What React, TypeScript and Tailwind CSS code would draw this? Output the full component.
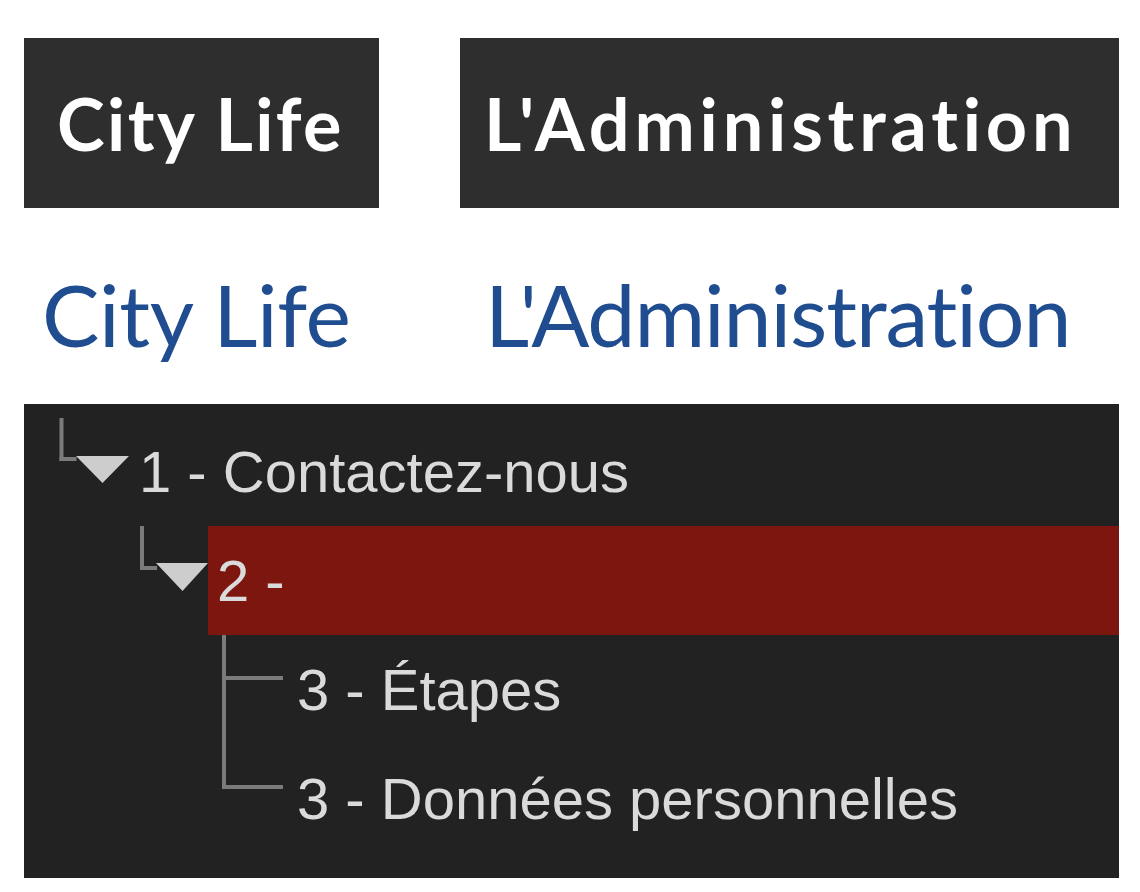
import React from 'react';

type Row = {
  label: string;
  selected?: boolean;
  svgWidth: number;
  guide: React.ReactNode;
};

const LINE = '#7b7b7b';
const ARROW = '#cdcdcd';

const rows: Row[] = [
  {
    label: '1 - Contactez-nous',
    svgWidth: 115,
    guide: (
      <>
        <rect x={35.5} y={1} width={4} height={43} fill={LINE} />
        <rect x={35.5} y={40} width={17} height={4} fill={LINE} />
        <polygon points="52,39 105,39 78.5,66" fill={ARROW} />
      </>
    ),
  },
  {
    label: '2 -',
    selected: true,
    svgWidth: 184,
    guide: (
      <>
        <rect x={116} y={0} width={4} height={44} fill={LINE} />
        <rect x={116} y={40} width={17} height={4} fill={LINE} />
        <polygon points="132,37 184,37 158.5,65" fill={ARROW} />
      </>
    ),
  },
  {
    label: '3 - Étapes',
    svgWidth: 273,
    guide: (
      <>
        <rect x={198} y={0} width={4} height={109} fill={LINE} />
        <rect x={198} y={41} width={61} height={4} fill={LINE} />
      </>
    ),
  },
  {
    label: '3 - Données personnelles',
    svgWidth: 273,
    guide: (
      <>
        <rect x={198} y={0} width={4} height={45} fill={LINE} />
        <rect x={198} y={41} width={61} height={4} fill={LINE} />
      </>
    ),
  },
];

export default function App() {
  return (
    <div className="w-[1140px] h-[892px] bg-white overflow-hidden [font-variant-ligatures:none]">
      {/* dark title tiles */}
      <div className="flex gap-[81px] pl-[24px] pt-[38px]">
        <div className="w-[355px] h-[170px] bg-[#2e2e2e] flex items-center pl-[33px]">
          <span className="text-white font-bold text-[72px] leading-none tracking-[2.4px] [font-family:Lato,sans-serif]">
            City Life
          </span>
        </div>
        <div className="w-[659px] h-[170px] bg-[#2e2e2e] flex items-center pl-[24px]">
          <span className="text-white font-bold text-[72px] leading-none tracking-[4.8px] [font-family:Lato,sans-serif]">
            L'Administration
          </span>
        </div>
      </div>

      {/* blue titles */}
      <div className="h-[196px] flex items-start pt-[63px] pl-[42px] text-[#1f4d90] text-[86px] leading-none [font-family:Lato,sans-serif]">
        <span className="w-[443px] shrink-0 tracking-[-0.4px]">City Life</span>
        <span className="tracking-[-1.1px]">L'Administration</span>
      </div>

      {/* tree panel */}
      <div className="ml-[24px] w-[1095px] h-[474px] bg-[#222222] pt-[13px] [font-family:'Liberation_Sans',Arial,sans-serif] text-[58px] text-[#dadada]">
        {rows.map((row) => (
          <div key={row.label} className="flex h-[109px]">
            <svg width={row.svgWidth} height={109} className="shrink-0">
              {row.guide}
            </svg>
            <div
              className={`flex-1 flex items-center leading-none ${
                row.selected ? 'bg-[#7c160f] pl-[9px]' : ''
              }`}
            >
              {row.label}
            </div>
          </div>
        ))}
      </div>
    </div>
  );
}
